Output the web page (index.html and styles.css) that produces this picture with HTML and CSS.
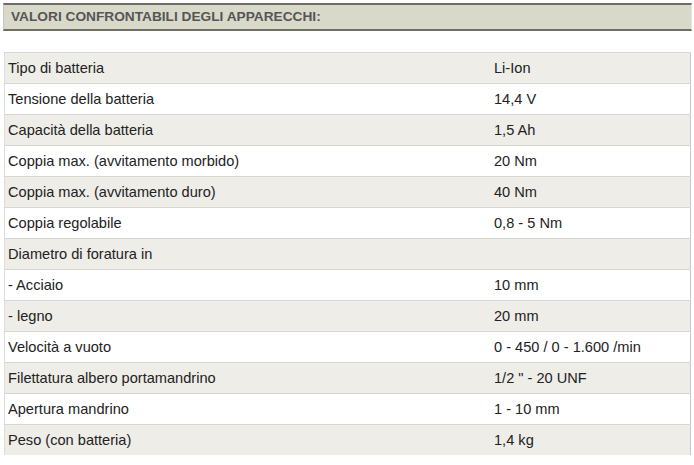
FILE: index.html
```html
<!DOCTYPE html>
<html>
<head>
<meta charset="utf-8">
<link rel="stylesheet" href="styles.css">
</head>
<body>
<div class="header">VALORI CONFRONTABILI DEGLI APPARECCHI:</div>
<table class="specs">
<tr><td class="lab">Tipo di batteria</td><td class="val">Li-Ion</td></tr>
<tr><td class="lab">Tensione della batteria</td><td class="val">14,4 V</td></tr>
<tr><td class="lab">Capacità della batteria</td><td class="val">1,5 Ah</td></tr>
<tr><td class="lab">Coppia max. (avvitamento morbido)</td><td class="val">20 Nm</td></tr>
<tr><td class="lab">Coppia max. (avvitamento duro)</td><td class="val">40 Nm</td></tr>
<tr><td class="lab">Coppia regolabile</td><td class="val">0,8 - 5 Nm</td></tr>
<tr><td class="lab">Diametro di foratura in</td><td class="val"></td></tr>
<tr><td class="lab">- Acciaio</td><td class="val">10 mm</td></tr>
<tr><td class="lab">- legno</td><td class="val">20 mm</td></tr>
<tr><td class="lab">Velocità a vuoto</td><td class="val">0 - 450 / 0 - 1.600 /min</td></tr>
<tr><td class="lab">Filettatura albero portamandrino</td><td class="val">1/2 " - 20 UNF</td></tr>
<tr><td class="lab">Apertura mandrino</td><td class="val">1 - 10 mm</td></tr>
<tr><td class="lab">Peso (con batteria)</td><td class="val">1,4 kg</td></tr>
</table>
</body>
</html>
```
FILE: styles.css
```css
html, body { margin: 0; padding: 0; background: #fff; }
body { font-family: "Liberation Sans", Arial, sans-serif; padding: 3px 2px 0 3px; }
.header {
  height: 24px;
  background: #d9d9ca;
  border-top: 2px solid #6e6e64;
  border-bottom: 2px solid #6e6e64;
  border-left: 1px solid #c8c8bc;
  border-right: 1px solid #e4e4da;
  color: #555;
  font-weight: bold;
  font-size: 13.7px;
  line-height: 24px;
  padding-left: 7px;
}
.specs {
  margin-top: 21px;
  margin-left: 1px;
  width: 687px;
  border-collapse: collapse;
  border-left: 1px solid #ddd;
  border-right: 1px solid #c8c8c8;
  font-size: 14.6px;
  color: #222;
}
.specs tr:nth-child(odd) { background: #eeede8; }
.specs tr:nth-child(even) { background: #fff; }
.specs td {
  height: 30px;
  padding: 0 0 0 3px;
  border-top: 1px solid #d6d6d2;
  vertical-align: middle;
}
.specs td.lab { width: 483px; }
```
